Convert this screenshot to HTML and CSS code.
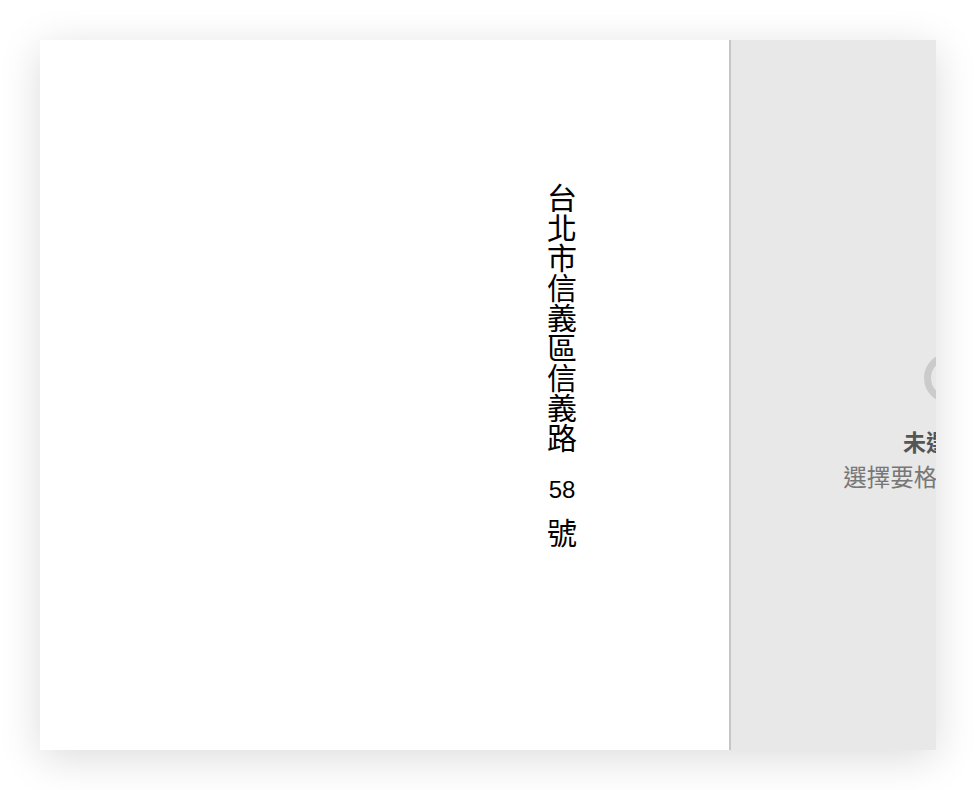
FILE: index.html
```html
<!DOCTYPE html>
<html lang="zh-Hant">
<head>
<meta charset="utf-8">
<title>直書地址</title>
<link rel="stylesheet" href="styles.css">
</head>
<body>
  <div class="card">
    <section class="preview">
      <div class="vertical-text">台北市信義區信義路<span class="num">58</span>號</div>
    </section>
    <aside class="side-panel">
      <div class="empty-state">
        <div class="ring"></div>
        <div class="empty-title">未選範圍</div>
        <div class="empty-desc">選擇要格式化的範圍</div>
      </div>
    </aside>
  </div>
</body>
</html>
```

FILE: styles.css
```css
html, body {
  margin: 0;
  padding: 0;
  background: #ffffff;
}

body {
  font-family: "Noto Sans CJK TC", "Liberation Sans", sans-serif;
  width: 976px;
  height: 790px;
  overflow: hidden;
}

.card {
  margin: 40px;
  width: 896px;
  height: 710px;
  background: #ffffff;
  display: flex;
  overflow: hidden;
  box-shadow: 0 8px 40px rgba(0, 0, 0, 0.14);
}

.preview {
  flex: 0 0 691px;
  display: flex;
  justify-content: flex-end;
  align-items: flex-start;
  padding: 143px 152px 0 0;
  box-sizing: border-box;
  border-right: 2px solid #c6c6c6;
}

.vertical-text {
  writing-mode: vertical-rl;
  font-size: 30px;
  line-height: 30px;
  color: #000000;
}

.num {
  display: inline-block;
  writing-mode: horizontal-tb;
  font-family: "Liberation Sans", sans-serif;
  font-size: 24px;
  line-height: 30px;
  height: 30px;
  width: 30px;
  text-align: center;
  vertical-align: top;
  margin: 22px 0 13px;
}

.side-panel {
  flex: 0 0 436px;
  background: #e8e8e8;
  display: flex;
  align-items: center;
  justify-content: center;
  padding-top: 56px;
  box-sizing: border-box;
}

.empty-state {
  display: flex;
  flex-direction: column;
  align-items: center;
}

.ring {
  width: 50px;
  height: 50px;
  box-sizing: border-box;
  border: 7px solid #cbcbcb;
  border-radius: 50%;
  margin-bottom: 21px;
}

.empty-title {
  font-size: 23px;
  line-height: 34px;
  font-weight: 700;
  color: #555555;
}

.empty-desc {
  font-size: 23.5px;
  line-height: 34px;
  margin-top: 1px;
  color: #777777;
}
```
